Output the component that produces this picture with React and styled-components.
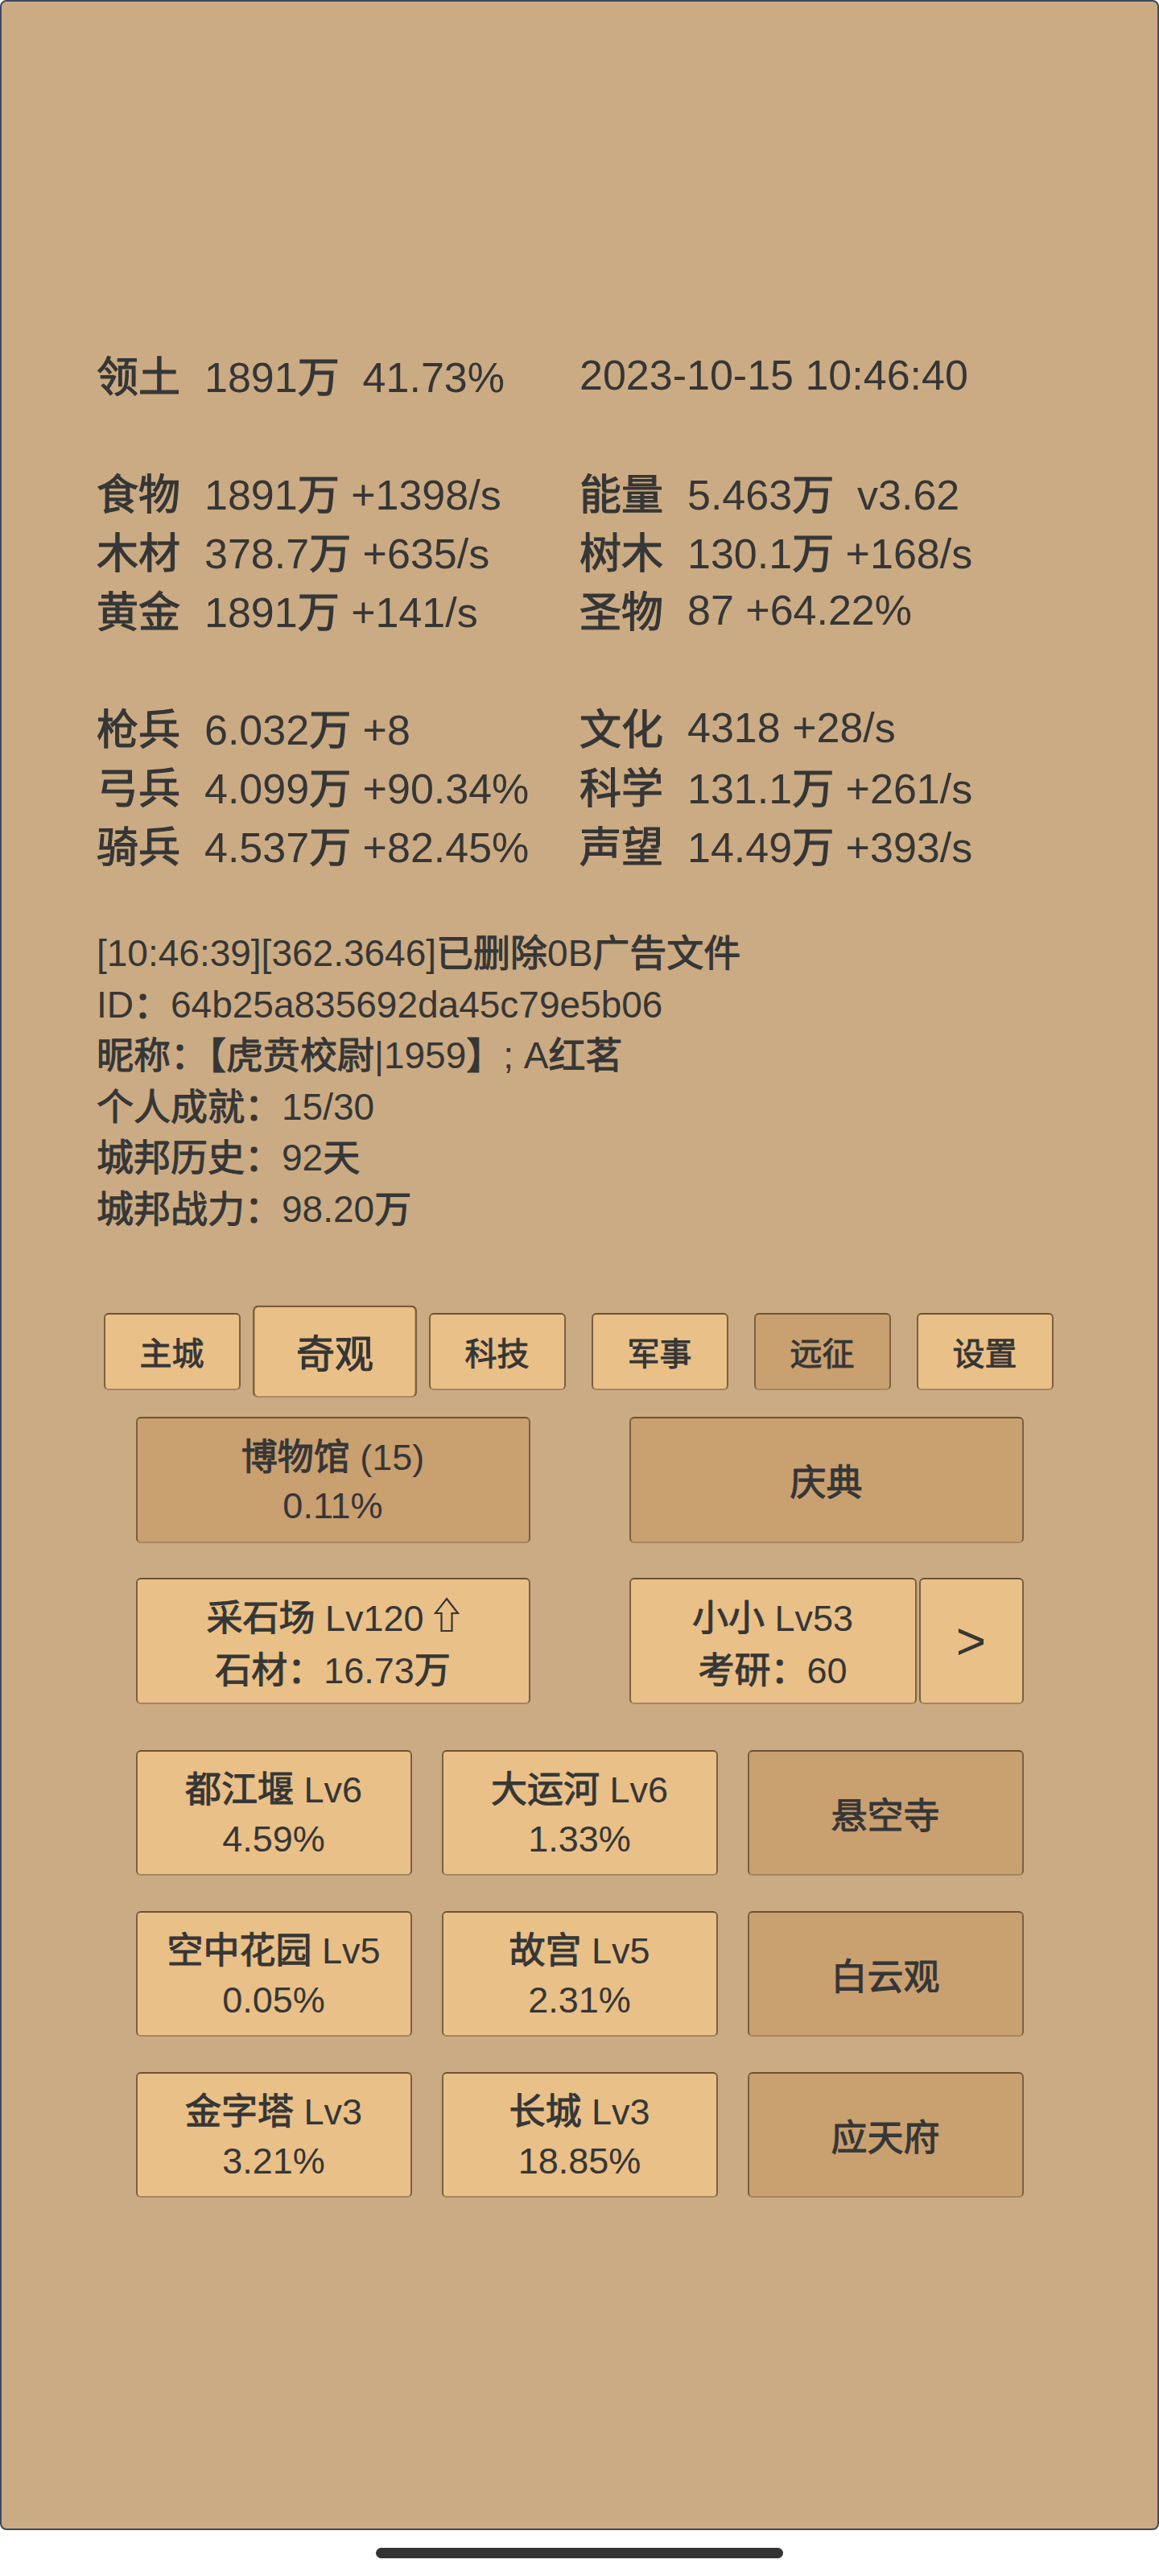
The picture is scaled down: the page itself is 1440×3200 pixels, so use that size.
import React from 'react';
import styled, { createGlobalStyle } from 'styled-components';

const Global = createGlobalStyle`
  html, body { margin: 0; padding: 0; background: #ffffff; }
  body {
    font-family: "Liberation Sans", "Noto Sans CJK SC", sans-serif;
    color: #363636;
  }
`;

const Screen = styled.div`
  width: 1440px;
`;

const Panel = styled.main`
  box-sizing: border-box;
  height: 3143px;
  background: #cbab83;
  border: 2px solid #3a4961;
  border-radius: 8px;
  padding-top: 428px;
  display: flex;
  flex-direction: column;
`;

const Han = styled.span`
  font-family: "Noto Sans CJK SC", sans-serif;
  font-weight: 400;
  -webkit-text-stroke: 0.024em currentColor;
`;

const CJK = /([\u2E80-\u9FFF\u3000-\u303F\uFF00-\uFFEF]+)/;
const T = ({ children }) =>
  String(children)
    .split(CJK)
    .map((p, i) => (i % 2 ? <Han key={i}>{p}</Han> : p));

/* ---------- stats ---------- */
const Stats = styled.section`
  padding-left: 118px;
  font-size: 52px;
  line-height: 73px;
  display: flex;
  flex-direction: column;
  gap: 73px;
`;

const StatGroup = styled.div`
  display: grid;
  grid-template-columns: 600px auto;
  grid-auto-rows: 73px;
`;

const Stat = styled.div`
  display: flex;
  align-items: center;
  height: 73px;
  white-space: pre;
`;

const Label = styled.span`
  width: 134px;
  flex-shrink: 0;
`;

/* ---------- log ---------- */
const Log = styled.section`
  margin-top: 64px;
  padding-left: 118px;
  font-size: 46px;
  line-height: 63px;
  display: flex;
  flex-direction: column;
`;

const LogLine = styled.div`
  height: 63.5px;
  display: flex;
  align-items: center;
  white-space: pre;
`;

/* ---------- tabs ---------- */
const Tabs = styled.nav`
  margin-top: 99px;
  display: flex;
  justify-content: center;
  gap: 32px;
  padding-right: 3px;
`;

const Tab = styled.div`
  box-sizing: border-box;
  width: 170px;
  height: 96px;
  border: 2px solid;
  border-color: #6a5232 #7a6040 #a4875f #7a6040;
  border-radius: 6px;
  background: ${(p) => (p.$dark ? '#c9a070' : '#e9c087')};
  display: flex;
  align-items: center;
  justify-content: center;
  font-size: 40px;
  transform: ${(p) => (p.$active ? 'scale(1.2)' : 'none')};
`;

/* ---------- boxes ---------- */
const Boxes = styled.section`
  width: 1103px;
  margin: 33px auto 0;
  display: flex;
  flex-direction: column;
`;

const TwoRow = styled.div`
  display: grid;
  grid-template-columns: 490px 490px;
  column-gap: 123px;
  margin-top: ${(p) => p.$mt || 0}px;
`;

const Pair = styled.div`
  display: grid;
  grid-template-columns: 357px 130px;
  column-gap: 3px;
`;

const Wonders = styled.div`
  margin-top: 57px;
  display: grid;
  grid-template-columns: repeat(3, 343px);
  column-gap: 37px;
  grid-auto-rows: 156px;
  row-gap: 44px;
`;

const Box = styled.div`
  box-sizing: border-box;
  height: ${(p) => (p.$tall ? 157 : 156)}px;
  border: 2px solid;
  border-color: #6a5232 #7a6040 #a4875f #7a6040;
  border-radius: 6px;
  background: ${(p) => (p.$dark ? '#c9a070' : '#e9c087')};
  display: flex;
  flex-direction: column;
  align-items: center;
  justify-content: center;
  text-align: center;
  font-size: ${(p) => (p.$big ? 64 : 45)}px;
`;

const BoxLine = styled.div`
  height: 65px;
  display: flex;
  align-items: center;
  justify-content: center;
  white-space: pre;
`;

const UpArrow = styled.svg`
  width: 32px;
  height: 44px;
  margin-left: 12px;
  flex-shrink: 0;
`;

/* ---------- bottom ---------- */
const Footer = styled.div`
  height: 57px;
  display: flex;
  justify-content: center;
  padding-top: 22px;
  box-sizing: border-box;
`;

const HomeBar = styled.div`
  width: 506px;
  height: 13px;
  border-radius: 7px;
  background: #333333;
`;

const statGroups = [
  [
    ['领土', '1891万  41.73%'],
    [null, '2023-10-15 10:46:40'],
  ],
  [
    ['食物', '1891万 +1398/s'],
    ['能量', '5.463万  v3.62'],
    ['木材', '378.7万 +635/s'],
    ['树木', '130.1万 +168/s'],
    ['黄金', '1891万 +141/s'],
    ['圣物', '87 +64.22%'],
  ],
  [
    ['枪兵', '6.032万 +8'],
    ['文化', '4318 +28/s'],
    ['弓兵', '4.099万 +90.34%'],
    ['科学', '131.1万 +261/s'],
    ['骑兵', '4.537万 +82.45%'],
    ['声望', '14.49万 +393/s'],
  ],
];

const logLines = [
  '[10:46:39][362.3646]已删除0B广告文件',
  'ID：64b25a835692da45c79e5b06',
  '昵称：【虎贲校尉|1959】; A红茗',
  '个人成就：15/30',
  '城邦历史：92天',
  '城邦战力：98.20万',
];

const tabs = [
  { name: '主城' },
  { name: '奇观', active: true },
  { name: '科技' },
  { name: '军事' },
  { name: '远征', dark: true },
  { name: '设置' },
];

const wonders = [
  { t: ['都江堰 Lv6', '4.59%'] },
  { t: ['大运河 Lv6', '1.33%'] },
  { t: ['悬空寺'], dark: true },
  { t: ['空中花园 Lv5', '0.05%'] },
  { t: ['故宫 Lv5', '2.31%'] },
  { t: ['白云观'], dark: true },
  { t: ['金字塔 Lv3', '3.21%'] },
  { t: ['长城 Lv3', '18.85%'] },
  { t: ['应天府'], dark: true },
];

const Lines = ({ lines }) =>
  lines.map((l, i) => (
    <BoxLine key={i}>
      <span>
        <T>{l}</T>
      </span>
    </BoxLine>
  ));

export default function App() {
  return (
    <Screen>
      <Global />
      <Panel>
        <Stats>
          {statGroups.map((g, gi) => (
            <StatGroup key={gi}>
              {g.map(([label, value], i) => (
                <Stat key={i}>
                  {label && (
                    <Label>
                      <T>{label}</T>
                    </Label>
                  )}
                  <span>
                    <T>{value}</T>
                  </span>
                </Stat>
              ))}
            </StatGroup>
          ))}
        </Stats>

        <Log>
          {logLines.map((l, i) => (
            <LogLine key={i}>
              <span>
                <T>{l}</T>
              </span>
            </LogLine>
          ))}
        </Log>

        <Tabs>
          {tabs.map((t) => (
            <Tab key={t.name} $active={t.active} $dark={t.dark}>
              <T>{t.name}</T>
            </Tab>
          ))}
        </Tabs>

        <Boxes>
          <TwoRow>
            <Box $dark $tall>
              <Lines lines={['博物馆 (15)', '0.11%']} />
            </Box>
            <Box $dark $tall>
              <Lines lines={['庆典']} />
            </Box>
          </TwoRow>
          <TwoRow $mt={43}>
            <Box $tall>
              <BoxLine>
                <span>
                  <T>采石场 Lv120</T>
                </span>
                <UpArrow viewBox="0 0 32 44" aria-hidden="true">
                  <path
                    d="M16 2 L30 20 L22.5 20 L22.5 42 L9.5 42 L9.5 20 L2 20 Z"
                    fill="none"
                    stroke="#363636"
                    strokeWidth="2.2"
                  />
                </UpArrow>
              </BoxLine>
              <BoxLine>
                <span>
                  <T>石材：16.73万</T>
                </span>
              </BoxLine>
            </Box>
            <Pair>
              <Box $tall>
                <Lines lines={['小小 Lv53', '考研：60']} />
              </Box>
              <Box $tall $big>
                <BoxLine>{'>'}</BoxLine>
              </Box>
            </Pair>
          </TwoRow>
          <Wonders>
            {wonders.map((w, i) => (
              <Box key={i} $dark={w.dark}>
                <Lines lines={w.t} />
              </Box>
            ))}
          </Wonders>
        </Boxes>
      </Panel>
      <Footer>
        <HomeBar />
      </Footer>
    </Screen>
  );
}
